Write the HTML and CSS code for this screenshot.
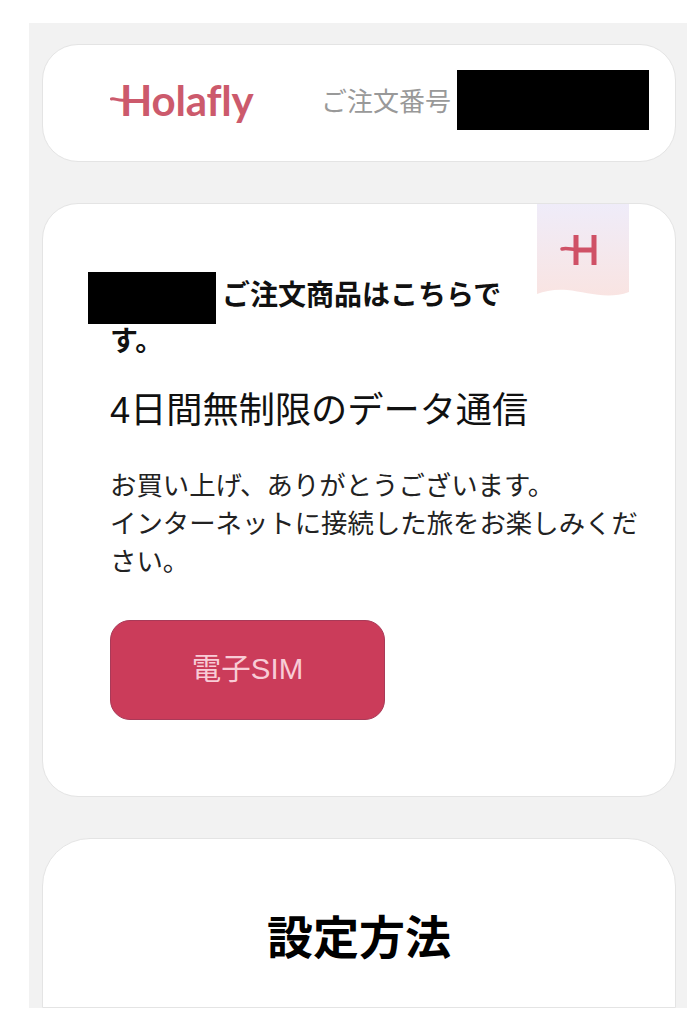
FILE: index.html
```html
<!DOCTYPE html>
<html lang="ja">
<head>
    <meta charset="UTF-8">
    <meta name="viewport" content="width=device-width, initial-scale=1.0">
    <title>Holafly ご注文</title>
    <link rel="stylesheet" href="styles.css">
</head>
<body>
    <div class="panel">
        <!-- Header -->
        <header class="card header-card">
            <div class="logo">
                <svg class="logo-dash" width="16" height="8" viewBox="0 0 16 8">
                    <path d="M1.500 3C5 2 8 5 15 4" fill="none" stroke="#cc5a6c" stroke-width="3" stroke-linecap="round"/>
                </svg>
                <span class="logo-text">Holafly</span>
            </div>
            <div class="order-label">ご注文番号</div>
            <div class="redact redact-order"></div>
        </header>

        <!-- Order -->
        <section class="card order-card">
            <svg class="ribbon" width="92" height="94" viewBox="0 0 92 94">
                <defs>
                    <linearGradient id="ribbon-fill" x1="0" y1="0" x2="0" y2="1">
                        <stop offset="0" stop-color="#efecf9"/>
                        <stop offset="1" stop-color="#f9e4e2"/>
                    </linearGradient>
                </defs>
                <path d="M0 0H92V88C70 96 50 88 30 86C18 85 8 87 0 90Z" fill="url(#ribbon-fill)"/>
                <path d="M25 45C31 43 36 47 51 46" fill="none" stroke="#cf5166" stroke-width="3.500" stroke-linecap="round"/>
                <path d="M39 31V61M57 31V61M39 46H57" fill="none" stroke="#cf5166" stroke-width="5"/>
            </svg>
            <h2 class="order-title"><span class="redact redact-name"></span>ご注文商品はこちらです。</h2>
            <p class="plan-name">4日間無制限のデータ通信</p>
            <p class="thanks">お買い上げ、ありがとうございます。<br>インターネットに接続した旅をお楽しみください。</p>
            <a class="sim-btn" href="#">電子SIM</a>
        </section>

        <!-- Setup -->
        <section class="card setup-card">
            <h2 class="setup-title">設定方法</h2>
        </section>
    </div>
</body>
</html>
```

FILE: styles.css
```css
/* General Styles */
* {
    margin: 0;
    padding: 0;
    box-sizing: border-box;
}

body {
    font-family: 'Liberation Sans', 'Noto Sans CJK JP', sans-serif;
    background: #fff;
    color: #111;
    height: 1024px;
    overflow: hidden;
}

.panel {
    margin: 23px 0 0 29px;
    height: 985px;
    padding: 21px 11px 0 13px;
    background: #f2f2f2;
    overflow: hidden;
    display: flex;
    flex-direction: column;
    gap: 41px;
}

.card {
    background: #fff;
    border: 1px solid #e4e4e4;
    border-radius: 36px;
    flex-shrink: 0;
}

.redact {
    background: #000;
}

/* Header */
.header-card {
    height: 118px;
    padding: 0 26px 7px 67px;
    display: flex;
    align-items: center;
}

.logo {
    width: 211px;
    display: flex;
    align-items: center;
    color: #cc5a6c;
}

.logo-dash {
    margin: 0 -6px 0 0;
}

.logo-text {
    font-family: 'Lato', sans-serif;
    font-size: 42px;
    font-weight: 700;
    line-height: 1;
    letter-spacing: -0.2px;
}

.order-label {
    width: 136px;
    font-size: 26px;
    color: #999;
    white-space: nowrap;
}

.redact-order {
    width: 192px;
    height: 60px;
}

/* Order */
.order-card {
    position: relative;
    height: 594px;
    padding: 69px 36px 0 67px;
}

.ribbon {
    position: absolute;
    top: 0;
    left: 494px;
}

.order-title {
    width: 420px;
    font-size: 28px;
    font-weight: 700;
    line-height: 46px;
}

.redact-name {
    display: inline-block;
    width: 128px;
    height: 52px;
    margin: -20px 6px -20px -22px;
    vertical-align: middle;
}

.plan-name {
    margin-top: 23px;
    font-size: 36.200px;
    line-height: 46px;
}

.thanks {
    margin-top: 33px;
    font-size: 26.400px;
    line-height: 38px;
    color: #222;
}

.sim-btn {
    display: flex;
    align-items: center;
    justify-content: center;
    width: 275px;
    height: 100px;
    margin-top: 39px;
    padding-bottom: 8px;
    border: 1px solid #a93a58;
    border-radius: 20px;
    background: #cb3c5a;
    color: #f8ccd6;
    font-size: 29.500px;
    text-decoration: none;
}

/* Setup */
.setup-card {
    flex: 1 0 auto;
    border-radius: 48px 48px 0 0;
    text-align: center;
    padding-top: 69px;
}

.setup-title {
    font-size: 46px;
    font-weight: 700;
    line-height: 60px;
    color: #000;
}
```
